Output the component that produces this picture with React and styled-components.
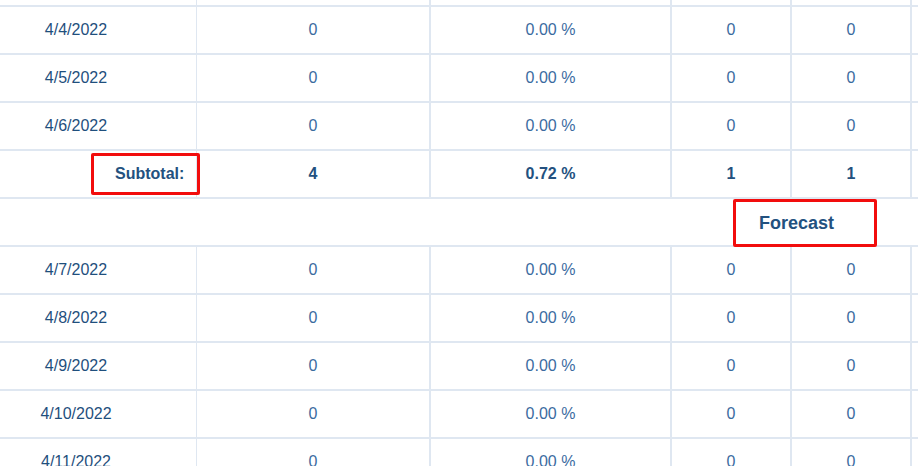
import styled, { createGlobalStyle } from 'styled-components';

const GlobalStyle = createGlobalStyle`
  body {
    margin: 0;
    background: #ffffff;
    font-family: "Liberation Sans", Arial, sans-serif;
  }
`;

const before = [
  { date: '4/4/2022', count: '0', pct: '0.00 %', a: '0', b: '0' },
  { date: '4/5/2022', count: '0', pct: '0.00 %', a: '0', b: '0' },
  { date: '4/6/2022', count: '0', pct: '0.00 %', a: '0', b: '0' },
];

const after = [
  { date: '4/7/2022', count: '0', pct: '0.00 %', a: '0', b: '0' },
  { date: '4/8/2022', count: '0', pct: '0.00 %', a: '0', b: '0' },
  { date: '4/9/2022', count: '0', pct: '0.00 %', a: '0', b: '0' },
  { date: '4/10/2022', count: '0', pct: '0.00 %', a: '0', b: '0' },
  { date: '4/11/2022', count: '0', pct: '0.00 %', a: '0', b: '0' },
];

function DataRow({ row }) {
  return (
    <Row>
      <DateCell>{row.date}</DateCell>
      <Cell>{row.count}</Cell>
      <Cell>{row.pct}</Cell>
      <Cell>{row.a}</Cell>
      <Cell>{row.b}</Cell>
      <LastCell />
    </Row>
  );
}

export default function App() {
  return (
    <>
      <GlobalStyle />
      <Viewport>
        <Grid>
          {/* row scrolled mostly out of view above */}
          <Row>
            <DateCell />
            <Cell />
            <Cell />
            <Cell />
            <Cell />
            <LastCell />
          </Row>
          {before.map(row => (
            <DataRow key={row.date} row={row} />
          ))}
          <Row>
            <DateCell $right>
              <Marked $subtotal>Subtotal:</Marked>
            </DateCell>
            <Cell $bold>4</Cell>
            <Cell $bold>0.72 %</Cell>
            <Cell $bold>1</Cell>
            <Cell $bold>1</Cell>
            <LastCell />
          </Row>
          <Row>
            <ForecastCell>
              <Marked>Forecast</Marked>
            </ForecastCell>
          </Row>
          {after.map(row => (
            <DataRow key={row.date} row={row} />
          ))}
        </Grid>
      </Viewport>
    </>
  );
}

const Viewport = styled.div`
  width: 918px;
  height: 466px;
  overflow: hidden;
`;

const Grid = styled.div`
  margin-top: -41px;
  display: flex;
  flex-direction: column;
`;

const Row = styled.div`
  display: grid;
  grid-template-columns: 197px 234px 241px 120px 120px 1fr;
  height: 48px;
  box-sizing: border-box;
  border-bottom: 2px solid #dfe7f1;
`;

const Cell = styled.div`
  display: flex;
  align-items: center;
  justify-content: center;
  box-sizing: border-box;
  border-right: 2px solid #dfe7f1;
  font-size: 16px;
  color: ${p => (p.$bold ? '#23517f' : '#3b6b9f')};
  font-weight: ${p => (p.$bold ? 700 : 400)};
`;

const LastCell = styled(Cell)`
  border-right: none;
`;

const DateCell = styled(Cell)`
  border-right-width: 1px;
  color: #1f4f7d;
  justify-content: ${p => (p.$right ? 'flex-end' : 'center')};
  padding-right: ${p => (p.$right ? '0' : '44px')};
`;

const ForecastCell = styled.div`
  grid-column: 4 / span 2;
  display: flex;
  align-items: center;
  padding-left: 61px;
`;

const Marked = styled.span`
  display: inline-flex;
  align-items: center;
  box-sizing: border-box;
  flex-shrink: 0;
  border: 3px solid #f20d0d;
  border-radius: 2px;
  font-weight: 700;
  color: #23517f;
  font-size: ${p => (p.$subtotal ? '16px' : '18px')};
  height: ${p => (p.$subtotal ? '42px' : '48px')};
  width: ${p => (p.$subtotal ? '109px' : '144px')};
  padding-left: ${p => (p.$subtotal ? '21px' : '23px')};
  margin-right: ${p => (p.$subtotal ? '-4px' : '0')};
  position: relative;
  z-index: 1;
`;
